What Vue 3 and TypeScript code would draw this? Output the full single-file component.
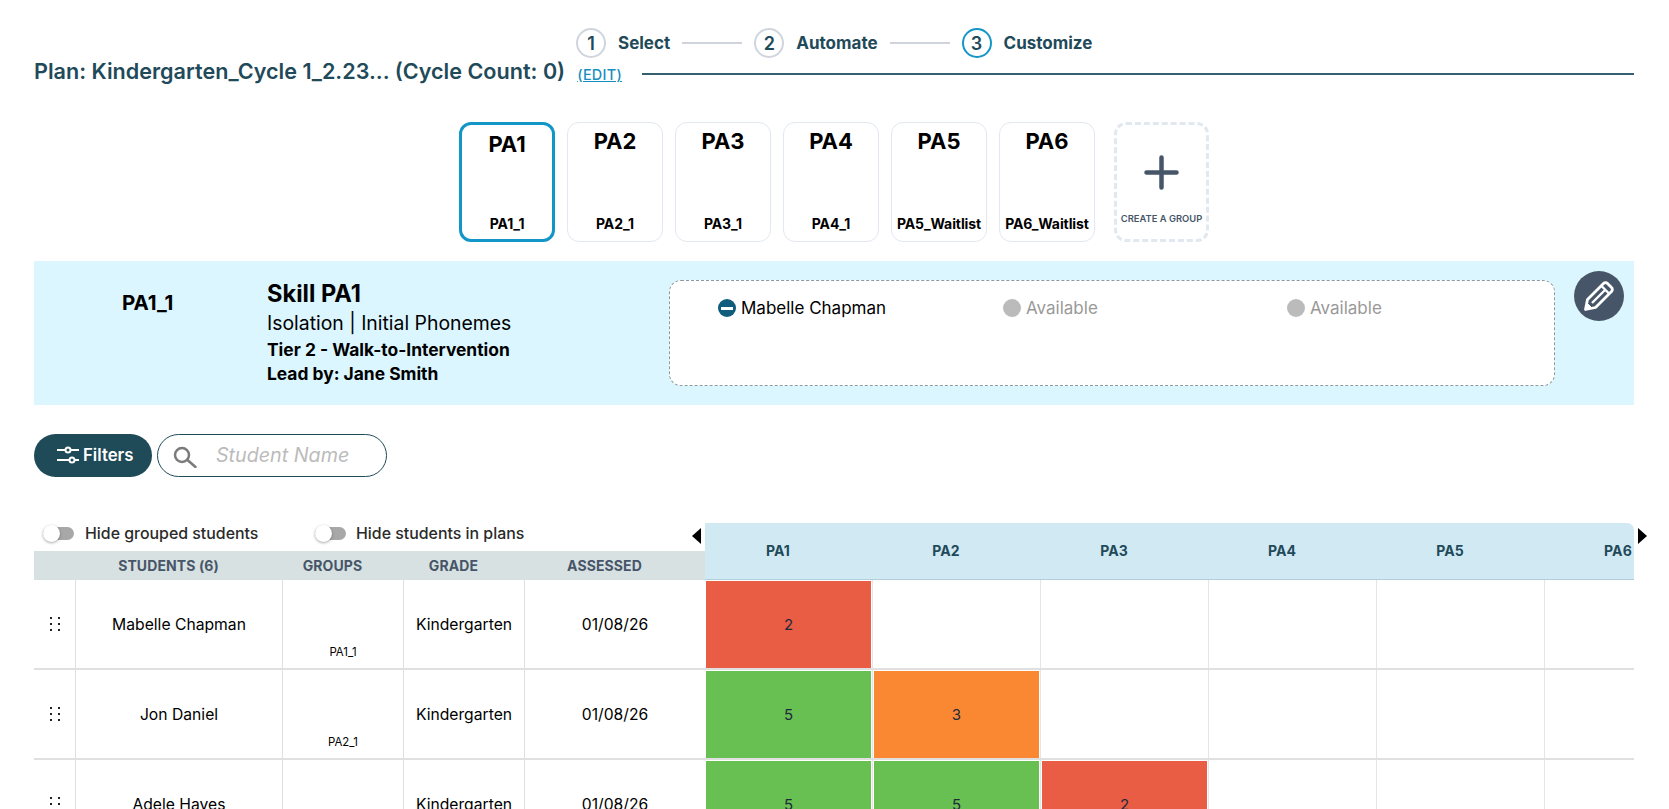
<script setup lang="ts">
const steps = [
  { n: 1, label: 'Select', active: false },
  { n: 2, label: 'Automate', active: false },
  { n: 3, label: 'Customize', active: true },
]
const tabs = [
  { title: 'PA1', sub: 'PA1_1', active: true },
  { title: 'PA2', sub: 'PA2_1', active: false },
  { title: 'PA3', sub: 'PA3_1', active: false },
  { title: 'PA4', sub: 'PA4_1', active: false },
  { title: 'PA5', sub: 'PA5_Waitlist', active: false },
  { title: 'PA6', sub: 'PA6_Waitlist', active: false },
]
const columns = ['PA1', 'PA2', 'PA3', 'PA4', 'PA5', 'PA6']
const students = [
  { name: 'Mabelle Chapman', group: 'PA1_1', scores: [2] },
  { name: 'Jon Daniel', group: 'PA2_1', scores: [5, 3] },
  { name: 'Adele Hayes', group: '', scores: [5, 5, 2] },
]
function tone(score?: number): string {
  if (score === undefined) return ''
  if (score >= 5) return 'good'
  if (score === 3) return 'mid'
  return 'low'
}
</script>

<template>
  <div class="page">
    <div class="top">
      <div class="steps">
        <template v-for="(s, i) in steps" :key="s.n">
          <span class="circle" :class="{ on: s.active }">{{ s.n }}</span>
          <span class="step-label">{{ s.label }}</span>
          <span v-if="i < steps.length - 1" class="step-line"></span>
        </template>
      </div>
      <div class="plan">
        <h1>Plan: Kindergarten_Cycle 1_2.23... (Cycle Count: 0)</h1>
        <a class="edit">(EDIT)</a>
        <span class="rule"></span>
      </div>
    </div>

    <div class="tabs">
      <div v-for="t in tabs" :key="t.title" class="tab" :class="{ active: t.active }">
        <div class="tab-title">{{ t.title }}</div>
        <div class="tab-sub">{{ t.sub }}</div>
      </div>
      <div class="tab create">
        <svg width="35" height="35" viewBox="0 0 35 35">
          <path d="M17.500 2.500v30M2.500 17.500h30" stroke="#475569" stroke-width="4.500" stroke-linecap="round" fill="none" />
        </svg>
        <div class="create-label">CREATE A GROUP</div>
      </div>
    </div>

    <section class="panel">
      <div class="panel-name">PA1_1</div>
      <div class="panel-info">
        <div class="skill">Skill PA1</div>
        <div class="iso">Isolation | Initial Phonemes</div>
        <div class="tier">Tier 2 - Walk-to-Intervention</div>
        <div class="tier lead">Lead by: Jane Smith</div>
      </div>
      <div class="slots">
        <div class="slot">
          <span class="dot minus"><i></i></span>
          <span>Mabelle Chapman</span>
        </div>
        <div class="slot free"><span class="dot"></span><span>Available</span></div>
        <div class="slot free"><span class="dot"></span><span>Available</span></div>
      </div>
      <button class="pencil" aria-label="Edit">
        <svg width="32" height="32" viewBox="0 0 32 32" fill="none" stroke="#fff" stroke-width="2.800" stroke-linejoin="round">
          <path d="M2.500 29.500L4.500 19.500 20.500 3.500a2.800 2.800 0 0 1 4 0L28.500 7.500a2.800 2.800 0 0 1 0 4L12.500 27.500z" />
          <path d="M18.500 6l7.500 7.500M9 23l12.500-12.500" stroke-width="2.400" />
          <path d="M3 29l1.500-5.500 4 4z" fill="#fff" stroke-width="1" />
        </svg>
      </button>
    </section>

    <div class="search-row">
      <button class="filters">
        <svg width="22" height="18" viewBox="0 0 22 18" fill="none" stroke="#fff" stroke-width="2">
          <path d="M0 4h8.500M13.500 4H22M0 14h12.500M17.500 14H22" />
          <circle cx="11" cy="4" r="2.500" />
          <circle cx="15" cy="14" r="2.500" />
        </svg>
        <span>Filters</span>
      </button>
      <div class="search">
        <svg width="24" height="24" viewBox="0 0 24 24" fill="none" stroke="#7b7b7b" stroke-width="2.500">
          <circle cx="9" cy="11" r="7" />
          <path d="M14.500 16l8 7" stroke-linecap="round" />
        </svg>
        <span class="placeholder">Student Name</span>
      </div>
    </div>

    <div class="board">
      <div class="left">
        <div class="toggles">
          <label class="toggle first"><span class="track"><span class="knob"></span></span>Hide grouped students</label>
          <label class="toggle"><span class="track"><span class="knob"></span></span>Hide students in plans</label>
        </div>
        <div class="head row-grid">
          <span></span>
          <span>STUDENTS (6)</span>
          <span>GROUPS</span>
          <span>GRADE</span>
          <span>ASSESSED</span>
        </div>
        <div v-for="s in students" :key="s.name" class="row row-grid">
          <div class="cell">
            <span class="grip"><i v-for="d in 6" :key="d"></i></span>
          </div>
          <div class="cell">{{ s.name }}</div>
          <div class="cell group-cell"><span class="group-tag">{{ s.group }}</span></div>
          <div class="cell">Kindergarten</div>
          <div class="cell">01/08/26</div>
        </div>
      </div>
      <span class="arrow prev"></span>
      <div class="right">
        <div class="score-head">
          <span v-for="c in columns" :key="c" class="score-title">{{ c }}</span>
        </div>
        <div v-for="s in students" :key="s.name" class="score-row">
          <div v-for="(c, i) in columns" :key="c" class="score-cell">
            <div v-if="s.scores[i] !== undefined" class="score" :class="tone(s.scores[i])">{{ s.scores[i] }}</div>
          </div>
        </div>
      </div>
      <span class="arrow next"></span>
    </div>
  </div>
</template>

<style>
html, body { margin: 0; background: #fff; overflow: hidden; }
</style>

<style scoped>
* { box-sizing: border-box; }
.page {
  width: 1669px;
  height: 809px;
  overflow: hidden;
  padding: 28px 35px 0 34px;
  font-family: Inter, "Liberation Sans", sans-serif;
  color: #000;
  background: #fff;
}
.top { height: 94px; }
.steps {
  display: flex;
  align-items: center;
  height: 30px;
  margin-left: 542px;
  color: #1f4a5a;
}
.circle {
  width: 30px;
  height: 30px;
  border: 2px solid #d0d5dd;
  border-radius: 50%;
  display: flex;
  align-items: center;
  justify-content: center;
  font-size: 18px;
  font-weight: 600;
}
.circle.on { border-color: #1296c8; }
.step-label { margin-left: 12px; font-size: 17px; font-weight: 700; }
.step-line { width: 60px; height: 2px; background: #d0d5dd; margin: 0 12px; }
.plan { display: flex; align-items: center; height: 32px; color: #1f4a5a; }
.plan h1 { margin: 0 0 6px; font-size: 21.600px; font-weight: 600; white-space: nowrap; line-height: 32px; }
.edit {
  margin-left: 12px;
  font-size: 14.400px;
  font-weight: 500;
  color: #1a8fbf;
  text-decoration: underline;
  letter-spacing: 0.3px;
}
.rule { flex: 1; height: 2px; background: #35606f; margin-left: 20px; }

.tabs { display: flex; margin-left: 425px; height: 120px; }
.tab {
  width: 96px;
  height: 120px;
  margin-right: 12px;
  border: 1px solid #e2e8f0;
  border-radius: 12px;
  display: flex;
  flex-direction: column;
  align-items: center;
  justify-content: space-between;
  padding: 4px 0 9px;
}
.tab.active { border: 3px solid #1296c8; padding: 5px 0 7px; }
.tab-title { font-size: 22px; font-weight: 700; line-height: 28px; }
.tab-sub { font-size: 14px; font-weight: 700; letter-spacing: -0.1px; line-height: 16px; white-space: nowrap; }
.tab.create {
  width: 95px;
  margin: 0 0 0 7px;
  border: 3px dashed #e2e8f0;
  justify-content: flex-start;
  padding: 30px 0 0;
}
.create-label { font-size: 9.400px; font-weight: 600; line-height: 12px; color: #475569; margin-top: 23px; white-space: nowrap; }

.panel {
  display: flex;
  height: 144px;
  margin-top: 19px;
  background: #dbf6fe;
  position: relative;
}
.panel-name { width: 233px; padding: 30px 0 0 88px; font-size: 20.500px; font-weight: 700; line-height: 24px; }
.panel-info { width: 402px; padding-top: 19px; }
.skill { font-size: 23.600px; font-weight: 700; line-height: 28px; }
.iso { font-size: 19.400px; line-height: 30px; }
.tier { font-size: 17.400px; font-weight: 700; line-height: 24px; }
.slots {
  width: 886px;
  height: 106px;
  margin-top: 19px;
  background: #fff;
  border: 1px dashed #8a9aa0;
  border-radius: 12px;
  padding: 15px 0 0 48px;
  display: grid;
  grid-template-columns: repeat(3, 284px);
  align-items: start;
}
.slot { display: flex; align-items: center; gap: 5px; font-size: 17px; line-height: 24px; font-weight: 400; }
.slot.free { color: #999; margin-left: 1px; }
.dot { width: 18px; height: 18px; border-radius: 50%; background: #bbb; display: flex; align-items: center; justify-content: center; }
.dot.minus { background: #0f5c7c; }
.dot.minus i { display: block; width: 12px; height: 3px; background: #fff; }
.pencil {
  width: 50px;
  height: 50px;
  border: 0;
  padding: 0;
  border-radius: 50%;
  background: #475569;
  position: absolute;
  left: 1540px;
  top: 10px;
  display: flex;
  align-items: center;
  justify-content: center;
}

.search-row { display: flex; gap: 5px; margin-top: 29px; height: 43px; }
.filters {
  width: 118px;
  border: 0;
  border-radius: 22px;
  background: #1f4a58;
  color: #fff;
  font: 600 16.800px Inter, "Liberation Sans", sans-serif;
  display: flex;
  align-items: center;
  gap: 4px;
  padding: 0 0 2px 23px;
}
.filters svg { flex: none; margin-top: 1px; }
.search {
  width: 230px;
  border: 1px solid #1f4a58;
  border-radius: 22px;
  display: flex;
  align-items: center;
  padding-left: 15px;
}
.placeholder { margin-left: 19px; font-size: 19.700px; font-style: italic; color: #bbb; padding-bottom: 1px; }

.board { position: relative; display: flex; margin-top: 46px; }
.left { width: 671px; }
.toggles { height: 28px; padding: 0 0 8px 9px; display: flex; align-items: center; font-size: 15.900px; font-weight: 500; color: #2a2a2a; }
.toggle { display: flex; align-items: center; gap: 10px; white-space: nowrap; }
.toggle.first { width: 272px; gap: 11px; }
.track { width: 31px; height: 13px; background: #a8a8a8; border-radius: 7px; position: relative; display: block; }
.knob {
  position: absolute;
  left: 0;
  top: -2px;
  width: 17px;
  height: 17px;
  border-radius: 50%;
  background: #fff;
  box-shadow: 0 1px 3px rgba(0, 0, 0, 0.35);
}
.row-grid { display: grid; grid-template-columns: 41px 207px 121px 121px 181px; }
.head {
  height: 29px;
  background: #d7e1e1;
  color: #475569;
  font-size: 14px;
  font-weight: 700;
  letter-spacing: 0.1px;
  align-items: center;
  text-align: center;
}
.head span { padding-right: 20px; }
.row { height: 90px; border-bottom: 2px solid #e0e0e0; }
.cell {
  display: flex;
  align-items: center;
  justify-content: center;
  font-size: 15.700px;
  border-left: 1px solid #e0e0e0;
}
.cell:first-child { border-left: 0; }
.group-cell { align-items: flex-end; padding: 0 0 9px; }
.group-tag { font-size: 11.400px; line-height: 14px; }
.grip { display: grid; grid-template-columns: 2px 2px; gap: 4px 6px; }
.grip i { width: 2px; height: 2px; background: #222; display: block; }

.right { width: 929px; overflow: hidden; position: relative; }
.score-head {
  display: flex;
  height: 57px;
  padding-bottom: 2px;
  background: #d1e9f3;
  border-bottom: 1px solid #b3cfdc;
  border-top-right-radius: 7px;
  align-items: center;
}
.score-title {
  flex: 0 0 168px;
  padding-right: 22px;
  text-align: center;
  color: #1f4a5a;
  font-size: 14px;
  font-weight: 700;
  letter-spacing: 0.1px;
}
.score-row { display: flex; height: 90px; border-bottom: 2px solid #e0e0e0; }
.score-cell { flex: 0 0 168px; border-right: 1px solid #e5e5e5; padding: 1px 1px 0 1px; }
.score {
  height: 87px;
  display: flex;
  align-items: center;
  justify-content: center;
  font-size: 15px;
  color: #1e293b;
}
.score.good { background: #68c052; }
.score.mid { background: #fa8833; }
.score.low { background: #e95d45; }
.arrow { position: absolute; top: 5px; width: 0; height: 0; border-top: 8.500px solid transparent; border-bottom: 8.500px solid transparent; }
.arrow.prev { left: 658px; border-right: 9px solid #000; }
.arrow.next { left: 1604px; border-left: 9px solid #000; }
</style>
